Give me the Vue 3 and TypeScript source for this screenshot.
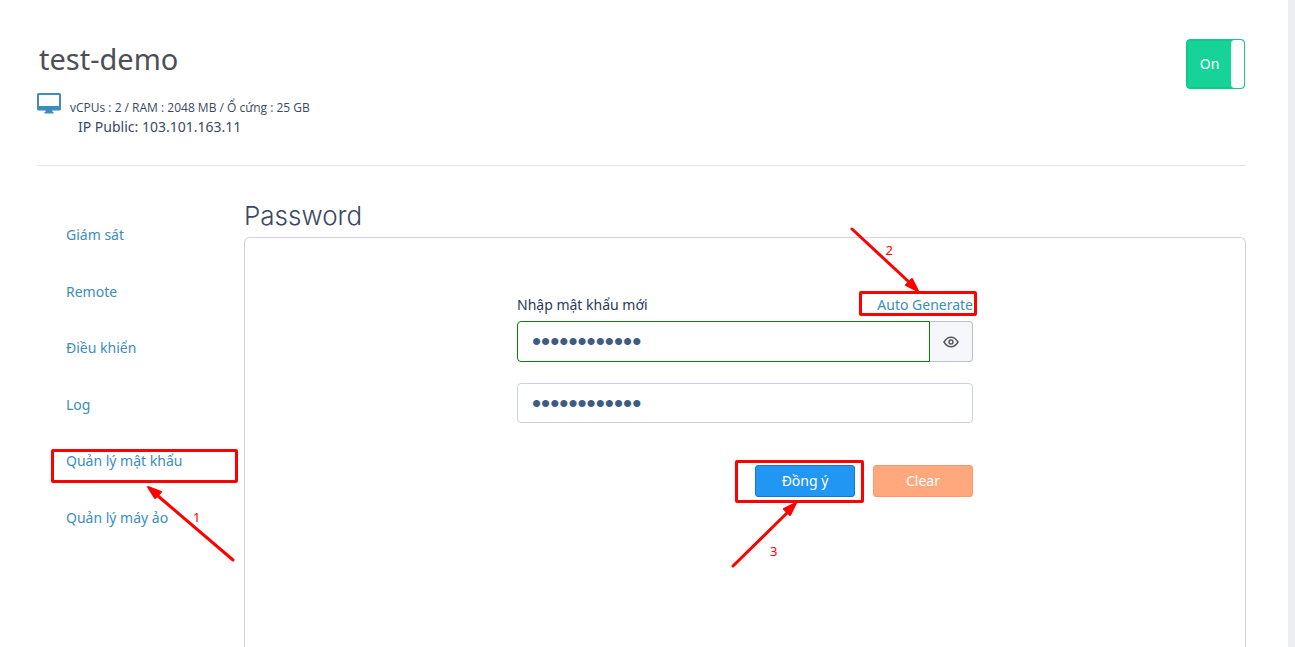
<script setup lang="ts">
import { ref } from 'vue'

interface NavItem {
  id: string
  label: string
}

const navItems: NavItem[] = [
  { id: 'monitor', label: 'Giám sát' },
  { id: 'remote', label: 'Remote' },
  { id: 'control', label: 'Điều khiển' },
  { id: 'log', label: 'Log' },
  { id: 'password', label: 'Quản lý mật khẩu' },
  { id: 'vm', label: 'Quản lý máy ảo' },
]

const powered = ref(true)
const visible = ref(false)
const password = ref('demo12345678')
const confirmation = ref('demo12345678')

function generate(): void {
  const chars = 'abcdefghijkmnpqrstuvwxyz23456789'
  const next = Array.from({ length: 12 }, () => chars[Math.floor(Math.random() * chars.length)]).join('')
  password.value = next
  confirmation.value = next
}

function clear(): void {
  password.value = ''
  confirmation.value = ''
}
</script>

<template>
  <main class="sheet">
    <header class="head">
      <div class="summary">
        <h1 class="title">test-demo</h1>
        <div class="specs">
          <svg class="monitor" viewBox="0 0 24 21" aria-hidden="true">
            <path
              fill="#3c8dbc"
              fill-rule="evenodd"
              d="M1.500 0h21a1.500 1.500 0 0 1 1.500 1.500v14.500a1.500 1.500 0 0 1-1.500 1.500H15.500V19h1v1.500h-9V19h1v-1.500H1.500A1.500 1.500 0 0 1 0 16V1.500A1.500 1.500 0 0 1 1.500 0zM2 2v11h20V2z"
            />
          </svg>
          <span>vCPUs : 2 / RAM : 2048 MB / Ổ cứng : 25 GB</span>
        </div>
        <p class="ip">IP Public: 103.101.163.11</p>
      </div>
      <label class="toggle">
        <input v-model="powered" type="checkbox" class="toggle-input" />
        <span class="toggle-text">{{ powered ? 'On' : 'Off' }}</span>
        <span class="toggle-handle"></span>
      </label>
    </header>

    <div class="body">
      <nav class="nav">
        <a v-for="item in navItems" :key="item.id" class="nav-link" :href="'#' + item.id">
          {{ item.label }}
          <template v-if="item.id === 'password'">
            <span class="mark mark-nav"></span>
            <svg class="arrow arrow-nav" viewBox="0 0 90 76" aria-hidden="true">
              <path d="M85 73 10 9" />
              <polygon points="0,0 13,5 7,11" />
            </svg>
            <span class="step step-nav">1</span>
          </template>
        </a>
      </nav>

      <section class="content">
        <h2 class="heading">Password</h2>
        <div class="panel">
          <form class="form" @submit.prevent>
            <div class="label-row">
              <label for="new-password">Nhập mật khẩu mới</label>
              <a class="generate" href="#generate" @click.prevent="generate">
                Auto Generate
                <span class="mark mark-generate"></span>
                <svg class="arrow arrow-generate" viewBox="0 0 70 66" aria-hidden="true">
                  <path d="M2 2 59 55" />
                  <polygon points="68,64 56,58 62,52" />
                </svg>
                <span class="step step-generate">2</span>
              </a>
            </div>
            <div class="group">
              <input
                id="new-password"
                v-model="password"
                class="field field-valid"
                :type="visible ? 'text' : 'password'"
              />
              <button class="reveal" type="button" aria-label="Hiện mật khẩu" @click="visible = !visible">
                <svg viewBox="0 0 16 12" aria-hidden="true">
                  <path d="M1 6C3 2.700 5.300 1.200 8 1.200S13 2.700 15 6c-2 3.300-4.300 4.800-7 4.800S3 9.300 1 6z" />
                  <circle cx="8" cy="6" r="2" />
                </svg>
              </button>
            </div>
            <input v-model="confirmation" class="field" type="password" aria-label="Nhập lại mật khẩu" />
            <div class="actions">
              <div class="submit-wrap">
                <button class="btn btn-primary" type="submit">Đồng ý</button>
                <span class="mark mark-submit"></span>
                <svg class="arrow arrow-submit" viewBox="0 0 66 66" aria-hidden="true">
                  <path d="M2 63 56 10" />
                  <polygon points="65,0 53,6 59,12" />
                </svg>
                <span class="step step-submit">3</span>
              </div>
              <button class="btn btn-clear" type="button" @click="clear">Clear</button>
            </div>
          </form>
        </div>
      </section>
    </div>
  </main>
</template>

<style>
body {
  margin: 0;
  background: #edeef4;
}
</style>

<style scoped>
* {
  box-sizing: border-box;
}

.sheet {
  display: flex;
  flex-direction: column;
  min-height: 100vh;
  margin-right: 7px;
  padding: 39px 42px 0 37px;
  background: #fff;
  color: #3b4863;
  font-family: "Noto Sans", "Open Sans", sans-serif;
  font-size: 14px;
  line-height: 20px;
}

.head {
  display: flex;
  justify-content: space-between;
  align-items: flex-start;
  height: 127px;
  border-bottom: 1px solid #e3e3e6;
}

.title {
  margin: 0 0 12px 2px;
  color: #4d4f55;
  font-size: 29px;
  font-weight: 400;
  line-height: 40px;
}

.specs {
  display: flex;
  align-items: flex-end;
  gap: 9px;
  height: 25px;
  font-family: "Open Sans", "Noto Sans", sans-serif;
  font-size: 12px;
  line-height: 16px;
}

.monitor {
  align-self: flex-start;
  width: 24px;
  height: 21px;
  margin-top: 2px;
}

.ip {
  margin: 1px 0 0 41px;
}

.toggle {
  display: flex;
  width: 59px;
  height: 50px;
  margin-right: 1px;
  border: 1px solid #10c888;
  border-radius: 4px;
  background: #16d39a;
  color: #fff;
  cursor: pointer;
}

.toggle-input {
  position: absolute;
  width: 1px;
  height: 1px;
  margin: 0;
  opacity: 0;
}

.toggle-text {
  flex: 1;
  border: 1px solid #10c888;
  border-right: 0;
  line-height: 46px;
  text-align: center;
}

.toggle-handle {
  width: 13px;
  border-radius: 4px;
  background: #fff;
}

.body {
  display: flex;
  flex: 1;
}

.nav {
  display: flex;
  flex-direction: column;
  justify-content: space-between;
  align-items: flex-start;
  width: 207px;
  height: 303px;
  margin-top: 59px;
  padding-left: 29px;
}

.nav-link,
.generate {
  position: relative;
  color: #3c8dbc;
  text-decoration: none;
}

.content {
  display: flex;
  flex: 1;
  flex-direction: column;
  padding-top: 34px;
}

.heading {
  margin: 0 0 5px;
  font-family: Inter, "Open Sans", sans-serif;
  font-size: 26px;
  font-weight: 300;
  line-height: 32px;
}

.panel {
  flex: 1;
  padding: 57px 20px 0;
  border: 1px solid #d0d3dc;
  border-bottom: 0;
  border-radius: 6px 6px 0 0;
}

.form {
  display: flex;
  flex-direction: column;
  max-width: 456px;
  margin: 0 auto;
}

.label-row {
  display: flex;
  justify-content: space-between;
  margin-bottom: 6px;
  color: #2b3a58;
}

.group {
  display: flex;
  margin-bottom: 21px;
}

.field {
  width: 100%;
  height: 40px;
  padding: 0 14px;
  border: 1px solid #cad3e3;
  border-radius: 4px;
  outline: 0;
  background: #fff;
  color: #3f5b85;
  font-family: "Liberation Sans", sans-serif;
  font-size: 26px;
}

.field-valid {
  flex: 1;
  width: auto;
  min-width: 0;
  height: 41px;
  border-color: #0b7d0b;
  border-radius: 4px 0 0 4px;
}

.reveal {
  display: flex;
  align-items: center;
  justify-content: center;
  width: 43px;
  padding: 0;
  border: 1px solid #babfc7;
  border-left: 0;
  border-radius: 0 4px 4px 0;
  background: #f5f7fa;
  cursor: pointer;
}

.reveal svg {
  width: 16px;
  height: 12px;
  fill: none;
  stroke: #55595c;
  stroke-width: 1.5;
}

.actions {
  display: flex;
  justify-content: flex-end;
  gap: 18px;
  margin-top: 42px;
}

.submit-wrap {
  position: relative;
}

.btn {
  display: block;
  width: 100px;
  height: 32px;
  padding: 0;
  border: 1px solid;
  border-radius: 3px;
  color: #fff;
  font: inherit;
  cursor: pointer;
}

.btn-primary {
  border-color: #1976d2;
  background: #2196f3;
}

.btn-clear {
  border-color: #ff976a;
  background: #ffa87d;
}

.mark,
.arrow,
.step {
  position: absolute;
  pointer-events: none;
}

.mark {
  border: 3px solid #f00;
  border-radius: 2px;
}

.arrow {
  overflow: visible;
  fill: #f00;
}

.arrow path {
  fill: none;
  stroke: #f00;
  stroke-width: 3;
  stroke-linecap: round;
}

.arrow polygon {
  stroke: #f00;
  stroke-width: 2;
  stroke-linejoin: round;
}

.step {
  color: #f00;
  font-size: 13px;
  line-height: 16px;
}

.mark-nav {
  top: -2px;
  left: -15px;
  width: 187px;
  height: 34px;
}

.arrow-nav {
  top: 36px;
  left: 82px;
  width: 90px;
  height: 76px;
}

.step-nav {
  top: 58px;
  left: 127px;
}

.mark-generate {
  top: -4px;
  right: -4px;
  width: 118px;
  height: 25px;
}

.arrow-generate {
  top: -68px;
  right: 53px;
  width: 70px;
  height: 66px;
}

.step-generate {
  top: -53px;
  right: 80px;
}

.mark-submit {
  top: -5px;
  left: -20px;
  width: 129px;
  height: 43px;
}

.arrow-submit {
  top: 38px;
  left: -24px;
  width: 66px;
  height: 66px;
}

.step-submit {
  top: 78px;
  left: 15px;
}
</style>
